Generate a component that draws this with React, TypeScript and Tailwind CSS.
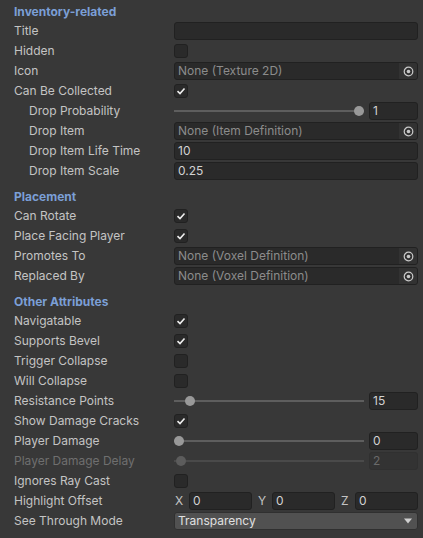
import React from 'react'

type Row =
  | { kind: 'text'; label: string; value?: string; indent?: boolean }
  | { kind: 'check'; label: string; checked: boolean; indent?: boolean }
  | { kind: 'object'; label: string; value: string; indent?: boolean }
  | { kind: 'slider'; label: string; value: string; pct: number; disabled?: boolean; indent?: boolean }

const font = { fontFamily: 'Inter, "Noto Sans", sans-serif' }

function Header({ title, first }: { title: string; first?: boolean }) {
  return (
    <div className={`flex h-[19px] items-center pl-[14px] pt-[1px] text-[12px] font-bold text-[#7b9fd6] ${first ? '' : 'mt-[6px]'}`}>
      {title}
    </div>
  )
}

function Label({ text, indent, disabled }: { text: string; indent?: boolean; disabled?: boolean }) {
  return (
    <div
      className={`w-[174px] shrink-0 truncate pr-[4px] text-[12px] ${indent ? 'pl-[29px]' : 'pl-[14px]'} ${
        disabled ? 'text-[#6f6f6f]' : 'text-[#c4c4c4]'
      }`}
    >
      {text}
    </div>
  )
}

function Check({ checked }: { checked: boolean }) {
  return (
    <div className="flex h-[14px] w-[14px] items-center justify-center rounded-[3px] border border-[#212121] bg-[#2a2a2a]">
      {checked && (
        <svg width="10" height="10" viewBox="0 0 10 10">
          <path d="M1.5 5.2 L4 7.5 L8.5 2.5" fill="none" stroke="#eeeeee" strokeWidth="1.6" />
        </svg>
      )}
    </div>
  )
}

function Field({ value, muted, disabled }: { value?: string; muted?: boolean; disabled?: boolean }) {
  return (
    <div
      className={`flex h-[18px] w-full items-center rounded-[3px] border px-[3px] text-[12px] ${
        disabled ? 'border-[#303030] bg-[#333333] text-[#6a6a6a]' : 'border-[#212121] bg-[#2a2a2a]'
      } ${muted ? 'text-[#8c8c8c]' : disabled ? '' : 'text-[#d2d2d2]'}`}
    >
      {value}
    </div>
  )
}

function ObjectField({ value }: { value: string }) {
  return (
    <div className="flex h-[18px] w-full items-center overflow-hidden rounded-[3px] border border-[#212121] bg-[#2a2a2a] text-[12px] text-[#8c8c8c]">
      <div className="flex-1 truncate px-[3px]">{value}</div>
      <div className="flex h-full w-[18px] items-center justify-center bg-[#323232]">
        <svg width="11" height="11" viewBox="0 0 11 11">
          <circle cx="5.5" cy="5.5" r="4.3" fill="none" stroke="#c8c8c8" strokeWidth="1.2" />
          <circle cx="5.5" cy="5.5" r="1.8" fill="#c8c8c8" />
        </svg>
      </div>
    </div>
  )
}

function Slider({ value, pct, disabled }: { value: string; pct: number; disabled?: boolean }) {
  return (
    <div className="flex w-full items-center gap-[5px]">
      <div className="relative h-[18px] flex-1">
        <div className={`absolute left-0 right-0 top-[8px] h-[2px] ${disabled ? 'bg-[#4a4a4a]' : 'bg-[#5e5e5e]'}`} />
        <div className="absolute left-[5px] right-[5px] top-0 h-full">
          <div
            className={`absolute top-[4px] h-[10px] w-[10px] -translate-x-1/2 rounded-full ${
              disabled ? 'bg-[#5c5c5c]' : 'bg-[#999999]'
            }`}
            style={{ left: `${pct}%` }}
          />
        </div>
      </div>
      <div className="w-[49px] shrink-0">
        <Field value={value} disabled={disabled} />
      </div>
    </div>
  )
}

function PropRow({ row }: { row: Row }) {
  const disabled = row.kind === 'slider' && row.disabled
  return (
    <div className="flex h-5 items-center pr-[5px]">
      <Label text={row.label} indent={row.indent} disabled={disabled} />
      <div className="flex flex-1 items-center">
        {row.kind === 'text' && <Field value={row.value} />}
        {row.kind === 'check' && <Check checked={row.checked} />}
        {row.kind === 'object' && <ObjectField value={row.value} />}
        {row.kind === 'slider' && <Slider value={row.value} pct={row.pct} disabled={row.disabled} />}
      </div>
    </div>
  )
}

const inventory: Row[] = [
  { kind: 'text', label: 'Title' },
  { kind: 'check', label: 'Hidden', checked: false },
  { kind: 'object', label: 'Icon', value: 'None (Texture 2D)' },
  { kind: 'check', label: 'Can Be Collected', checked: true },
  { kind: 'slider', label: 'Drop Probability', value: '1', pct: 100, indent: true },
  { kind: 'object', label: 'Drop Item', value: 'None (Item Definition)', indent: true },
  { kind: 'text', label: 'Drop Item Life Time', value: '10', indent: true },
  { kind: 'text', label: 'Drop Item Scale', value: '0.25', indent: true },
]

const placement: Row[] = [
  { kind: 'check', label: 'Can Rotate', checked: true },
  { kind: 'check', label: 'Place Facing Player', checked: true },
  { kind: 'object', label: 'Promotes To', value: 'None (Voxel Definition)' },
  { kind: 'object', label: 'Replaced By', value: 'None (Voxel Definition)' },
]

const other: Row[] = [
  { kind: 'check', label: 'Navigatable', checked: true },
  { kind: 'check', label: 'Supports Bevel', checked: true },
  { kind: 'check', label: 'Trigger Collapse', checked: false },
  { kind: 'check', label: 'Will Collapse', checked: false },
  { kind: 'slider', label: 'Resistance Points', value: '15', pct: 6 },
  { kind: 'check', label: 'Show Damage Cracks', checked: true },
  { kind: 'slider', label: 'Player Damage', value: '0', pct: 0 },
  { kind: 'slider', label: 'Player Damage Delay', value: '2', pct: 1, disabled: true },
  { kind: 'check', label: 'Ignores Ray Cast', checked: false },
]

export default function App() {
  return (
    <div className="min-h-screen bg-[#383838] pt-[2px]" style={font}>
      <Header title="Inventory-related" first />
      {inventory.map(r => (
        <PropRow key={r.label} row={r} />
      ))}

      <Header title="Placement" />
      {placement.map(r => (
        <PropRow key={r.label} row={r} />
      ))}

      <Header title="Other Attributes" />
      {other.map(r => (
        <PropRow key={r.label} row={r} />
      ))}

      <div className="flex h-5 items-center pr-[5px]">
        <Label text="Highlight Offset" />
        <div className="grid flex-1 grid-cols-3 gap-[5px]">
          {['X', 'Y', 'Z'].map(axis => (
            <div key={axis} className="flex items-center">
              <div className="w-[15px] shrink-0 pl-[1px] text-[12px] text-[#c4c4c4]">{axis}</div>
              <Field value="0" />
            </div>
          ))}
        </div>
      </div>

      <div className="flex h-5 items-center pr-[5px]">
        <Label text="See Through Mode" />
        <div className="flex h-[18px] flex-1 items-center justify-between rounded-[3px] border border-[#303030] bg-[#515151] px-[3px] text-[12px] text-[#e0e0e0]">
          <span>Transparency</span>
          <svg width="10" height="6" viewBox="0 0 10 6" className="mr-[1px]">
            <path d="M1 0.5 L9 0.5 L5 5.5 Z" fill="#d0d0d0" />
          </svg>
        </div>
      </div>
    </div>
  )
}
